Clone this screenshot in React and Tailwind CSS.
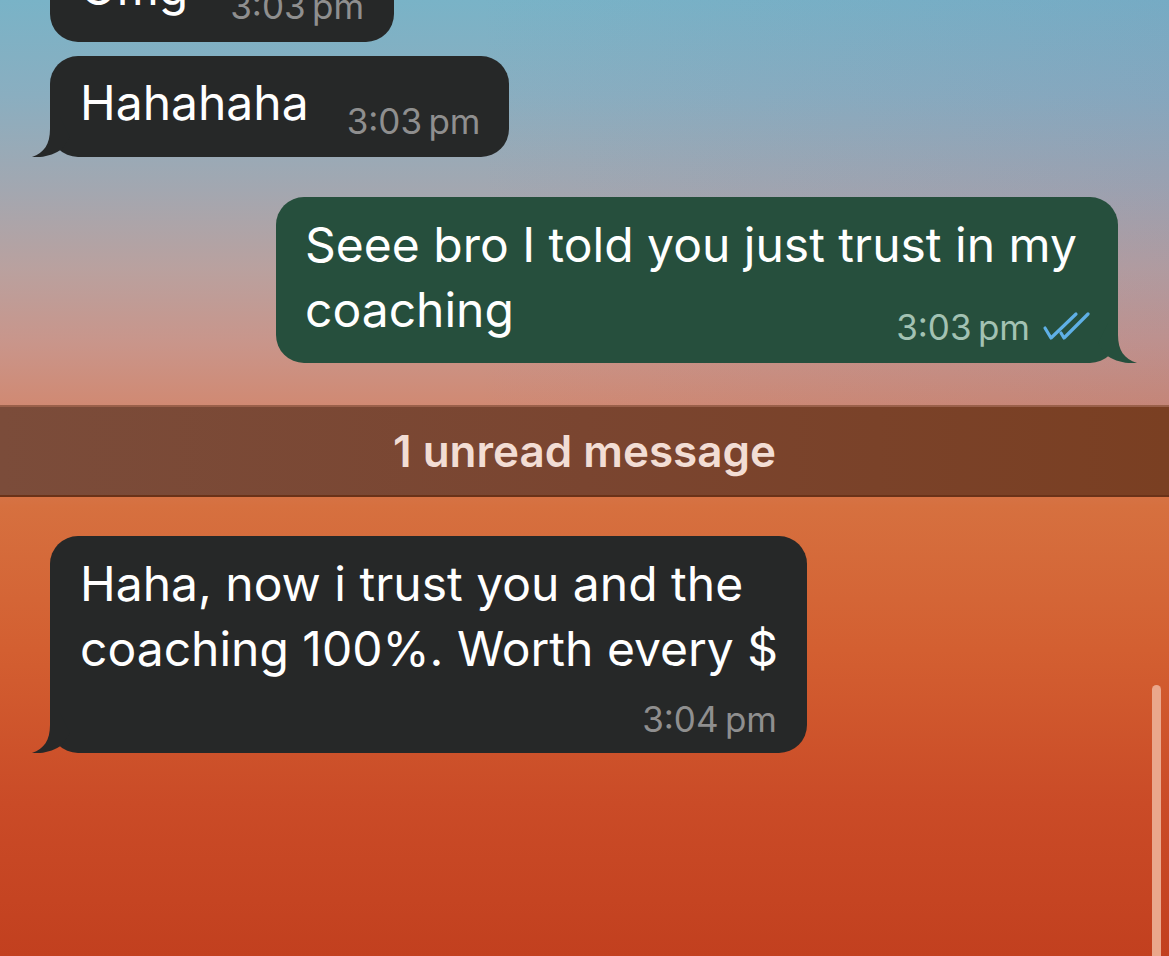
import React from "react";

const font = { fontFamily: "Inter, 'Noto Sans', sans-serif" };

// tail drawn at the bottom-left of an incoming bubble
const TailLeft = ({ color }) => (
    <svg
        className="absolute left-[-20px] bottom-0"
        width="60"
        height="40"
        viewBox="-20 -40 60 40"
    >
        <path d="M0,-40 L0,-28 C0,-13 -6,-4 -18,0 C-8,1 4,-2 12,-8 L20,-20 L10,-40 Z" fill={color} />
    </svg>
);

const TailRight = ({ color }) => (
    <svg
        className="absolute right-[-20px] bottom-0"
        width="60"
        height="40"
        viewBox="-40 -40 60 40"
    >
        <path d="M0,-40 L0,-28 C0,-13 6,-4 19,0 C8,1 -4,-2 -12,-8 L-20,-20 L-10,-40 Z" fill={color} />
    </svg>
);

const Checks = () => (
    <svg width="48" height="30" viewBox="0 0 48 30" className="ml-[12px] mb-[6px]" fill="none">
        <path d="M3,17 L9,27 L34,3" stroke="#5fb0e6" strokeWidth="3.2" strokeLinecap="round" strokeLinejoin="round" />
        <path d="M19,22 L22,27 L46,3" stroke="#5fb0e6" strokeWidth="3.2" strokeLinecap="round" strokeLinejoin="round" />
    </svg>
);

const App = () => {
    return (
        <div
            className="relative w-full h-[956px] overflow-hidden bg-[linear-gradient(180deg,#79b3c7_0%,#8aaec0_10%,#a3a7b0_20%,#b9a19f_28%,#c9958a_36%,#d08a74_42%,#d6703f_53%,#d35f31_68%,#ca4b27_84%,#c2401f_100%)]"
            style={font}
        >
            {/* cool tint on the top right */}
            <div className="absolute top-0 left-0 right-0 h-[405px] bg-[linear-gradient(90deg,rgba(0,0,0,0)_40%,rgba(90,100,170,0.10)_100%)]" />

            <div className="relative flex flex-col">
                {/* Omg bubble, cut at top */}
                <div className="relative self-start ml-[50px] mt-[-59px] bg-[#262828] rounded-[28px] flex items-end pl-[30px] pr-[30px] pt-[14px] pb-[22px]">
                    <span className="text-white text-[48px] leading-[65px] whitespace-nowrap">Omg</span>
                    <span className="text-[#8f8f8f] text-[35px] leading-[40px] ml-[42px] mb-[-6px] whitespace-nowrap">3:03{"\u2009"}pm</span>
                </div>

                {/* Hahahaha */}
                <div className="relative self-start ml-[50px] mt-[14px] bg-[#262828] rounded-[28px] flex items-end pl-[30px] pr-[28px] pt-[14px] pb-[22px]">
                    <span className="text-white text-[48px] leading-[65px] whitespace-nowrap">Hahahaha</span>
                    <span className="text-[#8f8f8f] text-[35px] leading-[40px] ml-[38px] mb-[-6px] whitespace-nowrap">3:03{"\u2009"}pm</span>
                    <TailLeft color="#262828" />
                </div>

                {/* outgoing */}
                <div className="relative self-end mr-[51px] mt-[40px] w-[842px] bg-[#264f3d] rounded-[28px] flex flex-col pl-[29px] pr-[28px] pt-[15px] pb-[16px]">
                    <p className="text-white text-[48px] leading-[65px] whitespace-nowrap">
                        Seee bro I told you just trust in my
                        <br />
                        coaching
                    </p>
                    <div className="flex items-end justify-end mt-[-35px]">
                        <span className="text-[#a3c2b3] text-[35px] leading-[40px] whitespace-nowrap">3:03{"\u2009"}pm</span>
                        <Checks />
                    </div>
                    <TailRight color="#264f3d" />
                </div>

                {/* unread divider */}
                <div className="mt-[42px] h-[92px] flex items-center justify-center border-t-2 border-t-[#9a604a] border-b-2 border-b-[#6a3218] bg-[linear-gradient(90deg,#7b4c3a_0%,#7a4530_50%,#7a3f22_100%)]">
                    <span className="text-[#f2ddd4] text-[44px] font-semibold">1 unread message</span>
                </div>

                {/* incoming */}
                <div className="relative self-start ml-[50px] mt-[39px] w-[757px] bg-[#262828] rounded-[28px] flex flex-col pl-[30px] pr-[30px] pt-[15px] pb-[14px]">
                    <p className="text-white text-[48px] leading-[65px] whitespace-nowrap">
                        Haha, now i trust you and the
                        <br />
                        coaching 100%. Worth every $
                    </p>
                    <div className="flex justify-end mt-[18px]">
                        <span className="text-[#8f8f8f] text-[35px] leading-[40px] whitespace-nowrap">3:04{"\u2009"}pm</span>
                    </div>
                    <TailLeft color="#262828" />
                </div>
            </div>

            {/* scroll indicator */}
            <div className="absolute right-[8px] top-[685px] bottom-[-10px] w-[9px] rounded-full bg-[#eaa78c]" />
        </div>
    );
};

export default App;
